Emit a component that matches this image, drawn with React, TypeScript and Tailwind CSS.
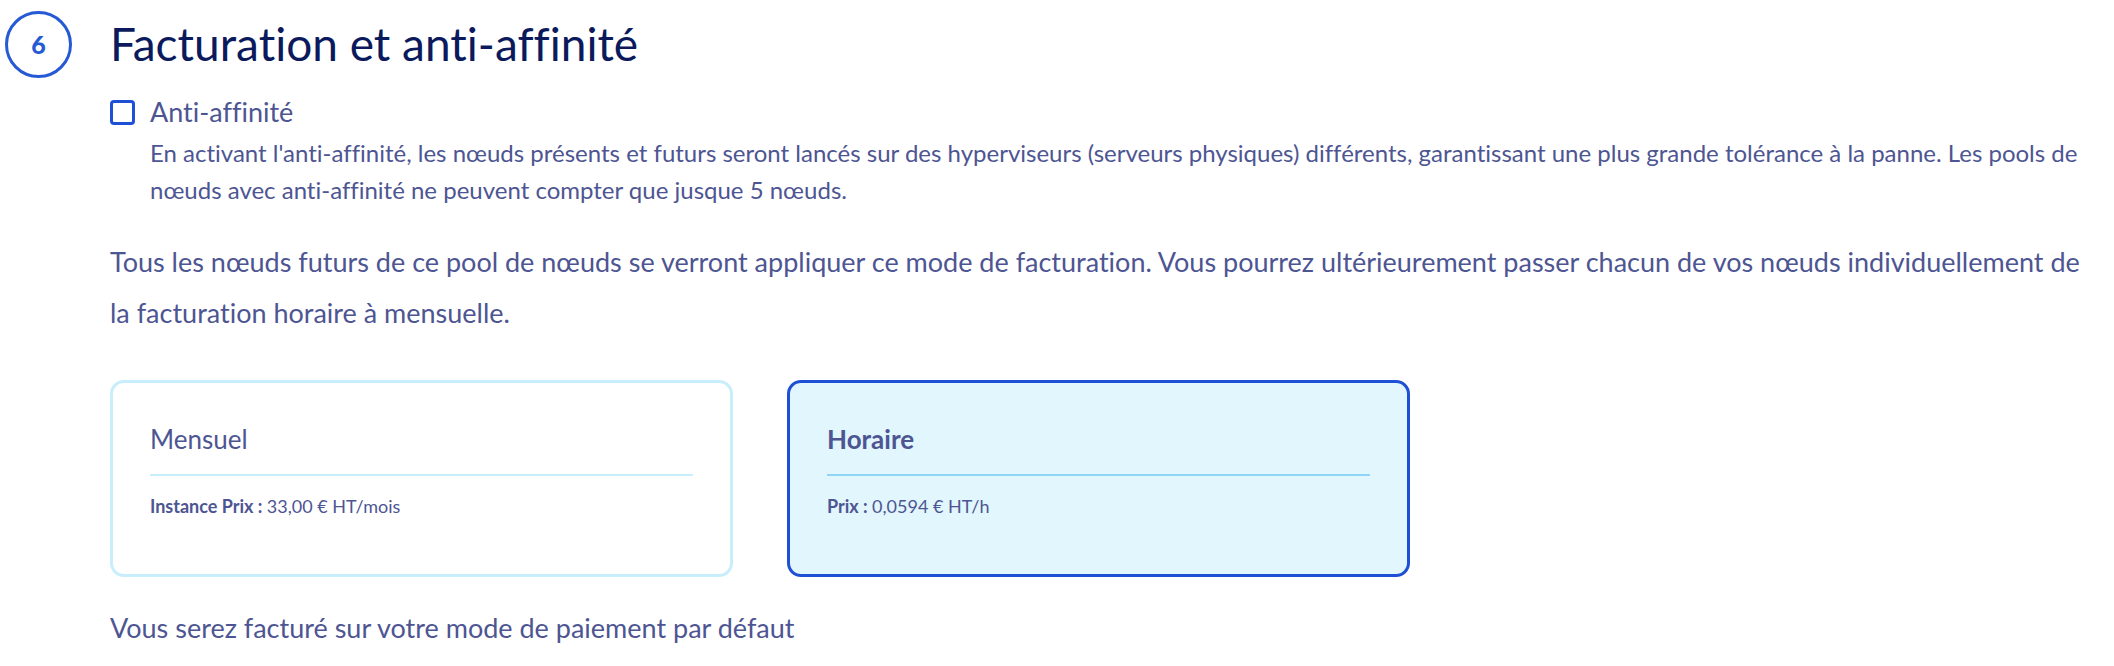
import React, { useState } from 'react';

type Billing = 'monthly' | 'hourly';

interface BillingCardProps {
  title: string;
  label: string;
  price: string;
  selected: boolean;
  onSelect: () => void;
}

const BillingCard: React.FC<BillingCardProps> = ({ title, label, price, selected, onSelect }) => (
  <div
    role="radio"
    aria-checked={selected}
    onClick={onSelect}
    className={`h-[197px] w-[623px] cursor-pointer rounded-[14px] border-[3px] px-[37px] pt-[39px] ${
      selected ? 'border-[#1d50d4] bg-[#e1f6fd]' : 'border-[#c8eefc] bg-white'
    }`}
  >
    <div className={`text-[26px] leading-[34px] ${selected ? 'font-bold' : 'font-normal'}`}>{title}</div>
    <div className={`mt-[18px] h-[2px] w-[543px] ${selected ? 'bg-[#8fd6f6]' : 'bg-[#c8eefc]'}`} />
    <div className="mt-[18px] text-[18px] leading-[24px]">
      <span className="font-bold">{label} : </span>
      {price}
    </div>
  </div>
);

const App: React.FC = () => {
  const [antiAffinity, setAntiAffinity] = useState(false);
  const [billing, setBilling] = useState<Billing>('hourly');

  return (
    <div className="min-h-screen bg-white font-['Lato',sans-serif] text-[#4d5592] [font-variant-ligatures:no-common-ligatures]">
      <div className="flex items-start pt-[11px] pr-[28px]">
        {/* Step badge */}
        <div className="ml-[5px] flex h-[67px] w-[67px] shrink-0 items-center justify-center rounded-full border-[3px] border-[#2659d4] text-[25px] font-black text-[#2659d4]">
          6
        </div>

        <div className="ml-[38px] flex-1">
          <h2 className="mt-[5px] text-[46px] leading-[56px] font-normal text-[#0b1a5c]">
            Facturation et anti-affinité
          </h2>

          {/* Anti-affinity option */}
          <label className="mt-[23px] flex cursor-pointer items-center gap-[15px]">
            <input
              type="checkbox"
              checked={antiAffinity}
              onChange={(e) => setAntiAffinity(e.target.checked)}
              className="h-[25px] w-[25px] shrink-0 cursor-pointer appearance-none rounded-[4px] border-[3px] border-[#1d50d4] bg-white"
            />
            <span className="text-[27px] leading-[34px]">Anti-affinité</span>
          </label>
          <p className="mt-[5px] ml-[40px] text-[24px] leading-[37px]">
            En activant l'anti-affinité, les nœuds présents et futurs seront lancés sur des hyperviseurs (serveurs physiques) différents, garantissant une plus grande tolérance à la panne. Les pools de nœuds avec anti-affinité ne peuvent compter que jusque 5 nœuds.
          </p>

          <p className="mt-[28px] text-[27px] leading-[51px]">
            Tous les nœuds futurs de ce pool de nœuds se verront appliquer ce mode de facturation. Vous pourrez ultérieurement passer chacun de vos nœuds individuellement de la facturation horaire à mensuelle.
          </p>

          {/* Billing cards */}
          <div className="mt-[42px] flex gap-[54px]">
            <BillingCard
              title="Mensuel"
              label="Instance Prix"
              price="33,00 € HT/mois"
              selected={billing === 'monthly'}
              onSelect={() => setBilling('monthly')}
            />
            <BillingCard
              title="Horaire"
              label="Prix"
              price="0,0594 € HT/h"
              selected={billing === 'hourly'}
              onSelect={() => setBilling('hourly')}
            />
          </div>

          <p className="mt-[34px] text-[27px] leading-[34px]">
            Vous serez facturé sur votre mode de paiement par défaut
          </p>
        </div>
      </div>
    </div>
  );
};

export default App;
